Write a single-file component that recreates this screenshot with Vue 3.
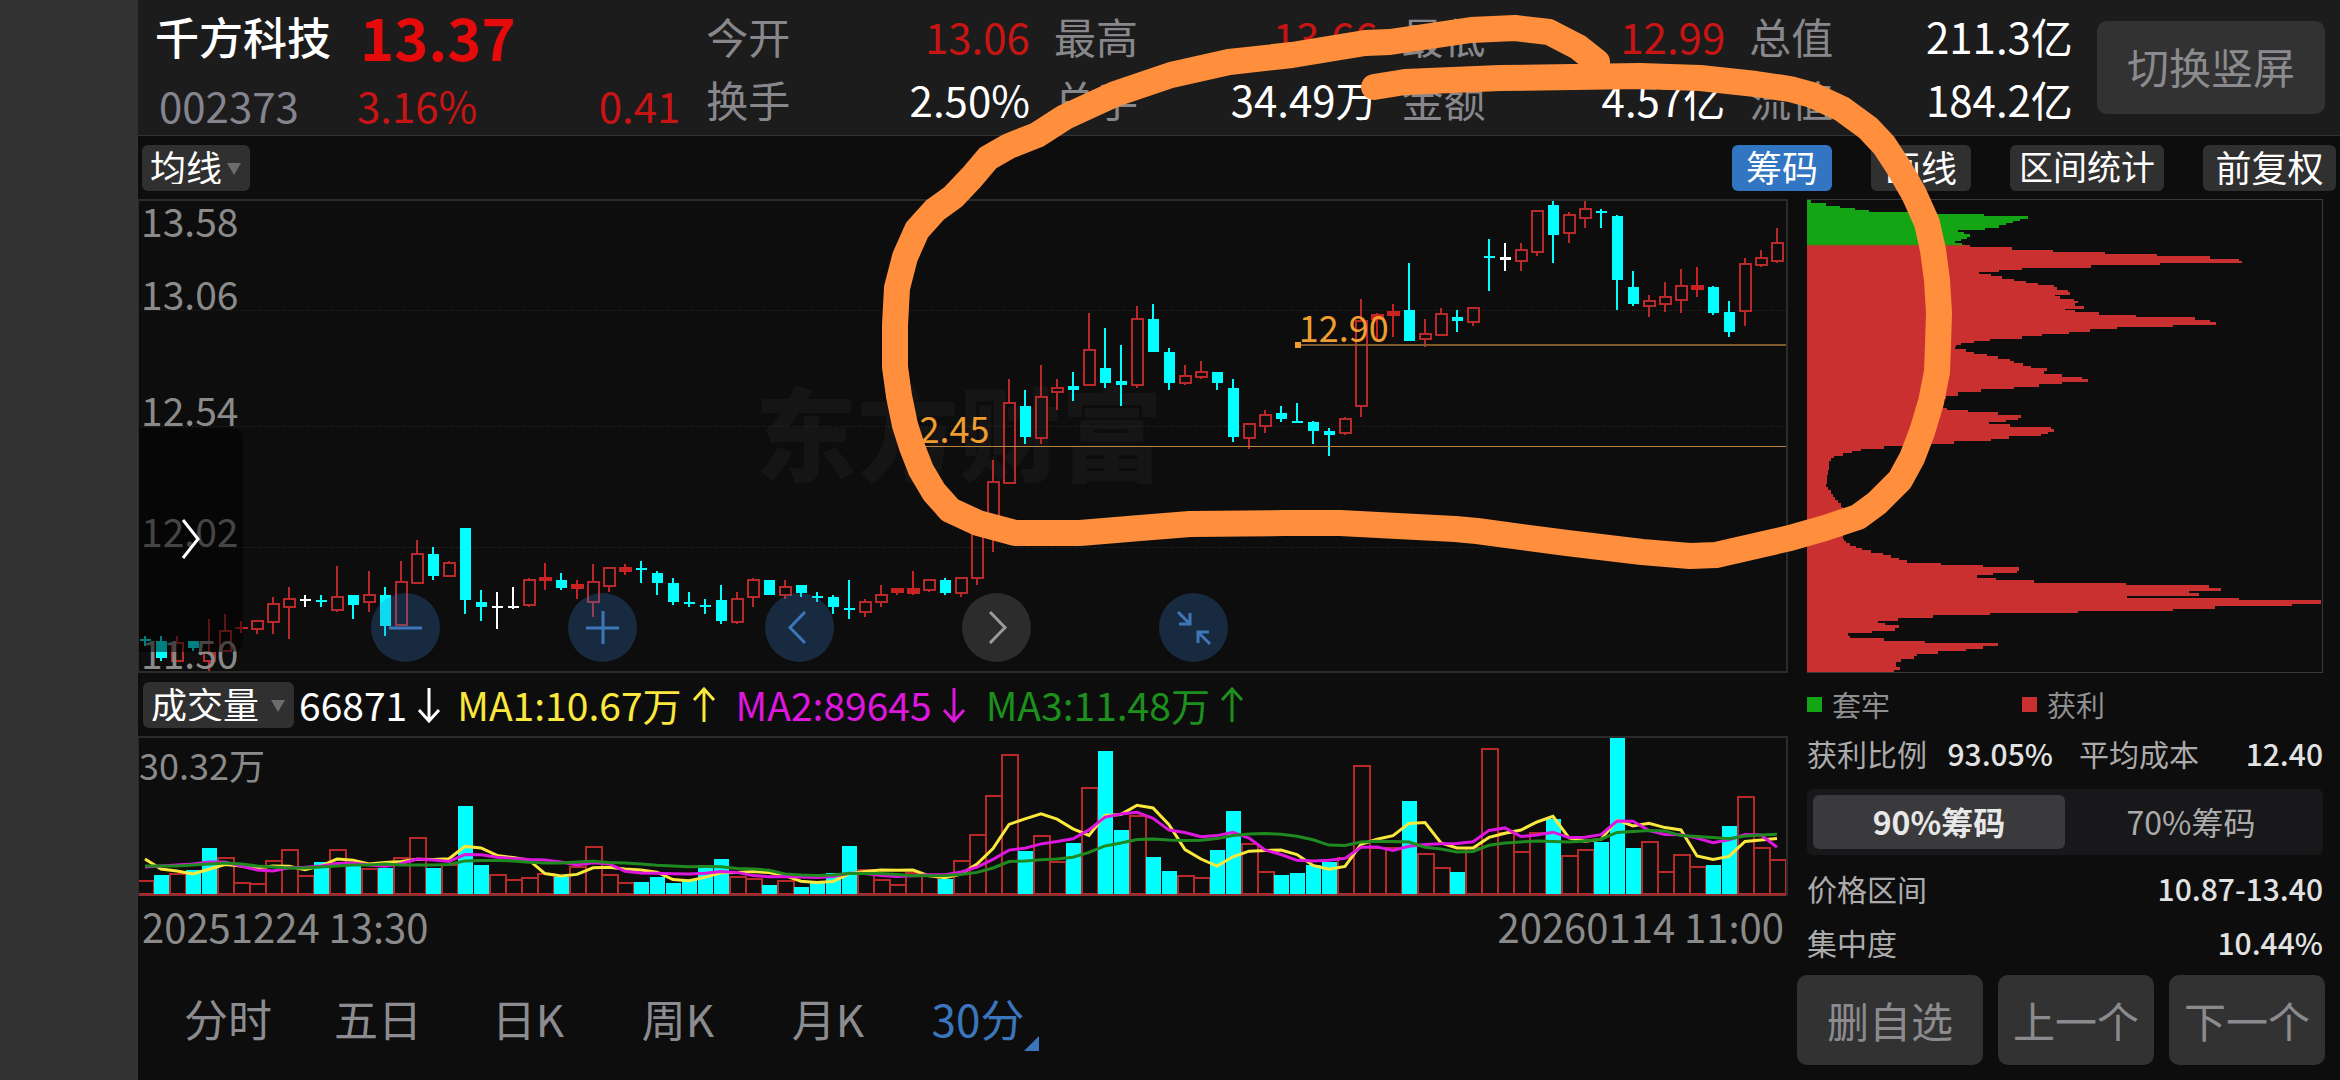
<script setup>
import { ref } from 'vue'

const stats = [
  [{ label: '今开', value: '13.06', up: true }, { label: '换手', value: '2.50%' }],
  [{ label: '最高', value: '13.66', up: true }, { label: '总手', value: '34.49万' }],
  [{ label: '最低', value: '12.99', up: true }, { label: '金额', value: '4.57亿' }],
  [{ label: '总值', value: '211.3亿' }, { label: '流值', value: '184.2亿' }],
]

const tools = [
  { name: '筹码', cls: 'on' },
  { name: '画线', cls: '' },
  { name: '区间统计', cls: 'wide' },
  { name: '前复权', cls: 'mid' },
]

const periods = ['分时', '五日', '日K', '周K', '月K', '30分']
const period = ref('30分')
const share = ref('90%筹码')

// Price chart space: x 138..1788, y 199..673. One bar every 16 units.
const STEP = 16
const FIRST = 145
const cx = (i) => FIRST + i * STEP

// kind (c = down, r = up, f = flat up, w = unchanged), high, body top, body bottom, low
const candles = [
  ['c', 636, 639, 641, 646], ['c', 636, 641, 658, 661], ['r', 636, 642, 662, 662], ['c', 641, 641, 648, 651],
  ['r', 619, 652, 662, 673], ['r', 614, 630, 652, 652], ['f', 621, 627, 629, 633], ['r', 620, 620, 630, 634],
  ['r', 597, 603, 623, 634], ['r', 587, 598, 608, 639], ['w', 595, 599, 601, 607], ['c', 595, 600, 602, 607],
  ['r', 566, 596, 611, 612], ['c', 595, 595, 605, 619], ['r', 571, 594, 603, 612], ['c', 587, 595, 626, 636],
  ['r', 561, 581, 626, 626], ['r', 540, 553, 584, 584], ['c', 547, 554, 576, 580], ['r', 561, 562, 577, 577],
  ['c', 528, 528, 600, 614], ['c', 590, 602, 607, 621], ['w', 592, 606, 608, 629], ['w', 587, 606, 608, 609],
  ['r', 578, 579, 606, 607], ['f', 563, 577, 581, 590], ['c', 573, 580, 588, 590], ['f', 580, 584, 589, 599],
  ['r', 564, 581, 603, 617], ['r', 567, 567, 587, 592], ['f', 564, 567, 572, 575], ['c', 561, 568, 570, 583],
  ['c', 571, 573, 583, 595], ['c', 578, 583, 602, 605], ['c', 592, 602, 604, 607], ['c', 599, 605, 607, 614],
  ['c', 585, 600, 621, 624], ['r', 592, 598, 623, 624], ['r', 578, 579, 598, 607], ['c', 580, 580, 595, 595],
  ['r', 580, 586, 596, 599], ['c', 585, 585, 593, 597], ['c', 592, 596, 598, 602], ['c', 595, 597, 607, 614],
  ['c', 580, 608, 610, 619], ['r', 599, 601, 613, 617], ['r', 585, 594, 603, 607], ['f', 588, 588, 593, 595],
  ['f', 571, 588, 594, 595], ['r', 579, 579, 591, 592], ['c', 578, 580, 593, 595], ['r', 577, 577, 594, 597],
  ['r', 524, 530, 579, 585], ['r', 460, 481, 527, 552], ['r', 379, 402, 484, 484], ['c', 390, 406, 437, 444],
  ['r', 365, 396, 439, 444], ['r', 379, 387, 393, 410], ['c', 372, 386, 390, 401], ['r', 313, 349, 386, 386],
  ['c', 328, 368, 383, 388], ['c', 345, 381, 385, 406], ['r', 306, 318, 386, 388], ['c', 304, 319, 352, 352],
  ['c', 348, 352, 383, 390], ['r', 365, 375, 384, 385], ['r', 361, 371, 378, 379], ['c', 372, 372, 383, 390],
  ['c', 379, 388, 437, 442], ['r', 423, 423, 439, 449], ['r', 410, 414, 427, 433], ['c', 406, 413, 419, 422],
  ['c', 403, 421, 423, 423], ['c', 421, 422, 431, 444], ['c', 428, 431, 435, 456], ['r', 417, 418, 434, 435],
  ['r', 299, 320, 407, 417], ['f', 313, 314, 320, 339], ['f', 304, 311, 316, 337], ['c', 263, 310, 341, 341],
  ['r', 319, 333, 340, 347], ['r', 308, 313, 336, 336], ['c', 310, 317, 321, 332], ['r', 307, 307, 323, 326],
  ['c', 239, 256, 258, 291], ['w', 243, 257, 260, 271], ['r', 243, 249, 262, 271], ['r', 210, 210, 253, 256],
  ['c', 199, 205, 235, 263], ['r', 212, 214, 234, 243], ['r', 201, 208, 219, 228], ['c', 209, 211, 213, 228],
  ['c', 215, 216, 280, 310], ['c', 271, 287, 304, 306], ['r', 295, 300, 307, 317], ['r', 282, 296, 305, 312],
  ['r', 269, 285, 301, 313], ['f', 267, 285, 290, 297], ['c', 286, 287, 313, 315], ['c', 301, 312, 332, 337],
  ['r', 258, 263, 312, 326], ['r', 250, 257, 266, 267], ['r', 228, 242, 262, 263],
]

// Volume bar heights; unchanged bars are drawn as rising ones.
const volumes = [
  15, 20, 22, 25, 47, 38, 13, 12, 35, 46, 20, 33, 46, 29, 27, 27, 38, 58, 27, 31,
  89, 30, 21, 16, 18, 22, 18, 29, 49, 21, 13, 13, 18, 12, 15, 30, 36, 19, 17, 10,
  15, 8, 12, 22, 49, 26, 16, 11, 23, 20, 16, 35, 61, 100, 141, 44, 60, 34, 52, 108,
  144, 65, 80, 38, 24, 20, 18, 45, 84, 52, 24, 20, 22, 30, 33, 38, 130, 48, 48, 94,
  42, 28, 23, 48, 147, 63, 44, 63, 76, 40, 46, 53, 159, 47, 54, 24, 41, 29, 30, 69,
  99, 48, 36,
]
const BASE = 895
const volumeDown = new Set([
  1, 3, 4, 11, 13, 15, 18, 20, 21, 26, 31, 32, 33, 34, 35, 36, 39, 41, 42, 43, 44, 50, 55, 58, 60, 61,
  63, 64, 67, 68, 71, 72, 73, 74, 79, 82, 88, 91, 92, 93, 98, 99,
])

// Averages start from values carried over from bars before the visible window.
const carried = {
  5: [36, 26, 24, 21],
  10: [28, 29, 30, 31, 33, 33, 29, 25, 24],
  20: [29, 29, 29, 30, 31, 32, 31, 29, 28, 27, 27, 28, 29, 30, 30, 31, 30, 30, 30],
}
function average(n) {
  return volumes
    .map((_, i) => {
      const v = i < n - 1
        ? carried[n][i]
        : volumes.slice(i - n + 1, i + 1).reduce((a, b) => a + b, 0) / n
      return `${cx(i)},${(BASE - v).toFixed(1)}`
    })
    .join(' ')
}
const averages = [
  { color: '#fbe83c', points: average(5) },
  { color: '#dd17dd', points: average(10) },
  { color: '#1f8a1f', points: average(20) },
]

// Chip distribution: [row top, row right edge]
const trapped = [
  [28, 60], [37, 102], [44, 143], [51, 185], [58, 225], [63, 340], [69, 553], [76, 680], [84, 658], [90, 638],
  [97, 617], [103, 596], [110, 556], [116, 480], [122, 498], [128, 515], [137, 505], [144, 487], [150, 472], [156, 492],
]
const profit = [
  [163, 515], [169, 633], [176, 751], [183, 900], [190, 1049], [196, 1199], [204, 1284], [210, 1290], [218, 1058],
  [224, 860], [231, 663], [238, 596], [245, 540], [249, 573], [257, 606], [264, 640], [270, 673], [276, 707],
  [283, 754], [290, 762], [298, 793], [304, 799], [312, 756], [317, 771], [324, 810], [331, 823], [337, 815],
  [345, 840], [354, 785], [358, 815], [365, 884], [373, 987], [380, 1158], [387, 1200], [393, 1217], [402, 1094],
  [409, 934], [416, 858], [423, 798], [430, 721], [436, 662], [444, 570], [450, 526], [457, 487], [464, 474],
  [470, 470], [476, 502], [483, 526], [490, 562], [497, 593], [505, 627], [512, 641], [518, 664], [525, 687],
  [532, 733], [541, 724], [550, 778], [559, 834], [567, 850], [576, 778], [582, 710], [590, 639], [597, 544],
  [604, 479], [618, 446], [625, 436], [652, 449], [658, 507], [666, 593], [673, 659], [682, 650], [689, 616],
  [695, 567], [700, 627], [709, 744], [716, 755], [724, 738], [732, 718], [738, 625], [746, 573], [753, 468],
  [760, 400], [768, 267], [775, 203], [782, 178], [789, 151], [797, 125], [803, 117], [812, 112], [827, 110],
  [840, 108], [855, 106], [870, 104], [882, 102], [890, 108], [900, 116], [910, 122], [920, 129], [930, 137],
  [940, 144], [950, 150], [1046, 153], [1053, 160], [1060, 172], [1067, 188], [1074, 205], [1081, 231], [1088, 265],
  [1096, 289], [1103, 311], [1110, 334], [1118, 430], [1125, 552], [1132, 654], [1142, 648], [1149, 580],
  [1156, 533], [1163, 587], [1170, 698], [1178, 961], [1186, 1197], [1194, 1231], [1202, 1141], [1209, 1169],
  [1217, 964], [1224, 1283], [1231, 1517], [1241, 1434], [1248, 1213], [1256, 1093], [1263, 824], [1270, 570],
  [1277, 408], [1286, 308], [1293, 251], [1299, 271], [1307, 311], [1316, 299], [1325, 234], [1331, 166],
  [1338, 170], [1346, 268], [1353, 386], [1361, 593], [1370, 550], [1377, 502], [1385, 422], [1393, 361],
  [1400, 354], [1409, 318], [1416, 302], [1431, 315], [1440, 297],
]
function steps(rows, end) {
  let d = `M48 ${rows[0][0]}`
  rows.forEach(([top, right], i) => {
    d += `H${right}V${i + 1 < rows.length ? rows[i + 1][0] : end}`
  })
  return d + 'H48Z'
}
const trappedPath = steps(trapped, 163)
const profitPath = steps(profit, 1447)
</script>

<template>
  <div class="app">
    <div class="gutter"></div>
    <main class="screen">
      <header class="head">
        <section class="quote">
          <div class="line top">
            <h1>千方科技</h1>
            <strong class="price">13.37</strong>
          </div>
          <div class="line low">
            <span class="code">002373</span>
            <span class="pct">3.16%</span>
            <span class="chg">0.41</span>
          </div>
        </section>
        <section class="stats">
          <dl v-for="(group, g) in stats" :key="g">
            <div v-for="s in group" :key="s.label">
              <dt>{{ s.label }}</dt>
              <dd :class="{ up: s.up }">{{ s.value }}</dd>
            </div>
          </dl>
        </section>
        <button class="rotate" type="button">切换竖屏</button>
      </header>

      <nav class="tools">
        <span class="pick ma">
          <select aria-label="主图指标"><option>均线</option></select>
        </span>
        <div class="tool-set">
          <button v-for="t in tools" :key="t.name" type="button" class="tool" :class="t.cls">{{ t.name }}</button>
        </div>
      </nav>

      <div class="body">
        <section class="charts">
          <div class="kline">
            <span class="watermark">东方财富</span>
            <svg class="plot" viewBox="138 199 1650 474" preserveAspectRatio="none">
              <g stroke="#2c2c2c" stroke-dasharray="1 2">
                <path d="M138 310.5H1788M138 426.5H1788M138 547.5H1788" />
              </g>
              <g v-for="(c, i) in candles" :key="i" :class="'k-' + c[0]">
                <template v-if="c[0] === 'r'">
                  <rect :x="cx(i) - 1" :y="c[1]" width="2" :height="c[2] - c[1]" />
                  <rect class="box" :x="cx(i) - 5" :y="c[2] + 1" width="11" :height="Math.max(c[3] - c[2] - 2, 1)" />
                  <rect :x="cx(i) - 1" :y="c[3]" width="2" :height="c[4] - c[3]" />
                </template>
                <template v-else>
                  <rect :x="cx(i) - 1" :y="c[1]" width="2" :height="c[4] - c[1]" />
                  <rect
                    :x="cx(i) - (c[0] === 'f' ? 6 : 5)" :y="c[2]"
                    :width="c[0] === 'f' ? 13 : 11" :height="c[3] - c[2]"
                  />
                </template>
              </g>
              <path d="M1298 345H1788" stroke="#80592a" stroke-width="2" />
              <rect x="1295" y="342" width="6" height="6" fill="#ef9c30" />
              <path d="M915 446.5H1788" stroke="#b98342" />
            </svg>
            <span class="axis a1">13.58</span>
            <span class="axis a2">13.06</span>
            <span class="axis a3">12.54</span>
            <span class="axis a4">12.02</span>
            <span class="axis a5">11.50</span>
            <span class="mark m1">12.90</span>
            <span class="mark m2">12.45</span>
            <button class="drawer" type="button" aria-label="展开">
              <svg viewBox="0 0 20 44"><path d="M2 3L17 22L2 41" /></svg>
            </button>
            <div class="controls">
              <button type="button" aria-label="缩小"><svg viewBox="0 0 69 69"><path d="M18 35H51" /></svg></button>
              <button type="button" aria-label="放大"><svg viewBox="0 0 69 69"><path d="M18 35H51M35 18V51" /></svg></button>
              <button type="button" aria-label="左移"><svg viewBox="0 0 69 69"><path d="M40 19L25 34.500L40 50" /></svg></button>
              <button type="button" class="off" aria-label="右移"><svg viewBox="0 0 69 69"><path d="M28 19L43 34.500L28 50" /></svg></button>
              <button type="button" aria-label="还原">
                <svg viewBox="0 0 69 69"><path d="M19 19L31 31M31 20V31H20M51 51L39 39M39 50V39H50" /></svg>
              </button>
            </div>
          </div>

          <div class="vol-info">
            <span class="pick vol">
              <select aria-label="副图指标"><option>成交量</option></select>
            </span>
            <span class="v0">66871<svg viewBox="0 0 24 36"><path d="M12 1V34M2 23L12 34L22 23" /></svg></span>
            <span class="v1">MA1:10.67万<svg viewBox="0 0 24 36"><path d="M12 35V2M2 13L12 2L22 13" /></svg></span>
            <span class="v2">MA2:89645<svg viewBox="0 0 24 36"><path d="M12 1V34M2 23L12 34L22 23" /></svg></span>
            <span class="v3">MA3:11.48万<svg viewBox="0 0 24 36"><path d="M12 35V2M2 13L12 2L22 13" /></svg></span>
          </div>

          <div class="volume">
            <svg class="plot" viewBox="138 736 1650 160" preserveAspectRatio="none">
              <g v-for="(v, i) in volumes" :key="i">
                <rect v-if="volumeDown.has(i)" :x="cx(i) - 7" :y="BASE - v" width="15" :height="v - 1" fill="#00ffff" />
                <rect v-else class="vbox" :x="cx(i) - 7" :y="BASE - v + 1" width="16" :height="v - 2" />
              </g>
              <path d="M138 895H1788" stroke="#8c3030" stroke-width="2" />
              <polyline v-for="a in averages" :key="a.color" class="avg" :points="a.points" :stroke="a.color" />
            </svg>
            <span class="vmax">30.32万</span>
          </div>

          <div class="dates">
            <time>20251224 13:30</time>
            <time>20260114 11:00</time>
          </div>

          <nav class="periods">
            <button
              v-for="p in periods" :key="p" type="button"
              :class="{ active: p === period }" @click="period = p"
            >{{ p }}</button>
          </nav>
        </section>

        <aside class="chips">
          <div class="inner">
            <svg class="dist" viewBox="48 27 1472 1420" preserveAspectRatio="none">
              <path :d="trappedPath" fill="#14a514" />
              <path :d="profitPath" fill="#cb3030" />
              <path d="M48 163H500" stroke="#806018" stroke-width="3" />
            </svg>
            <div class="legend">
              <span class="green">套牢</span>
              <span class="red">获利</span>
            </div>
            <div class="row pair">
              <p><span>获利比例</span><b>93.05%</b></p>
              <p><span>平均成本</span><b>12.40</b></p>
            </div>
            <div class="segment">
              <button
                v-for="s in ['90%筹码', '70%筹码']" :key="s" type="button"
                :class="{ active: s === share }" @click="share = s"
              >{{ s }}</button>
            </div>
            <p class="row range"><span>价格区间</span><b>10.87-13.40</b></p>
            <p class="row"><span>集中度</span><b>10.44%</b></p>
          </div>
          <div class="actions">
            <button type="button" class="del">删自选</button>
            <button type="button">上一个</button>
            <button type="button">下一个</button>
          </div>
        </aside>
      </div>
    </main>

    <svg class="scribble" viewBox="0 0 2340 1080" preserveAspectRatio="none">
      <path
        d="M1374 87L1405 82L1500 78L1640 76L1700 78L1756 84L1790 89L1812 95L1842 109L1868 128L1884 145L1899 168L1914 194
        L1927 223L1933 250L1937 280L1939 313L1938 345L1937 372L1931 402L1922 432L1912 458L1900 480L1877 503L1858 517
        L1825 528L1790 538L1716 555L1690 556L1642 552L1567 543L1477 531L1455 529L1340 523L1285 523L1190 524L1140 528
        L1080 533L1015 533L978 523L950 510L934 492L921 470L912 447L905 425L899 396L895 367L895 325L897 288L905 257
        L917 230L935 210L953 197L972 177L988 158L1009 146L1037 135L1065 117L1115 94L1171 75L1229 62L1292 55L1365 43L1390 42
        L1471 30L1515 28L1549 32L1578 47L1597 62"
      />
    </svg>
  </div>
</template>

<style>
body {
  margin: 0;
  background: #0d0d0d;
}
</style>

<style scoped>
.app {
  position: relative;
  display: flex;
  min-height: 100vh;
  background: #0d0d0d;
  color: #fff;
  font-family: "Noto Sans CJK SC", sans-serif;
  line-height: 1;
}
h1, p, dl, dd {
  margin: 0;
}
button, select {
  border: 0;
  padding: 0;
  margin: 0;
  font-family: inherit;
  line-height: 1;
  cursor: pointer;
}
.gutter {
  flex: 0 0 138px;
  background: #323232;
}
.screen {
  flex: 1;
  min-width: 0;
  display: flex;
  flex-direction: column;
}

.head {
  display: flex;
  align-items: flex-start;
  box-sizing: border-box;
  height: 136px;
  padding: 0 15px 0 17px;
  background: #1c1c1c;
  border-bottom: 1px solid #333;
}
.quote {
  flex: 525 0 0;
  margin-right: 26px;
}
.line {
  display: flex;
  align-items: center;
}
.line.top {
  height: 72px;
}
.line.low {
  height: 66px;
  font-size: 42px;
}
h1 {
  flex: 0 0 205px;
  font-size: 44px;
  font-weight: 500;
}
.price {
  color: #e60a0a;
  font-size: 58px;
  font-weight: 700;
}
.code {
  flex: 0 0 202px;
  padding-left: 4px;
  box-sizing: border-box;
  color: #84848f;
}
.pct, .chg, .up {
  color: #c91414;
}
.chg {
  margin-left: auto;
}
.stats {
  flex: 1366 0 0;
  display: flex;
  gap: 24px;
  margin-right: 24px;
}
.stats dl {
  flex: 1;
  padding-top: 4px;
}
.stats dl > div {
  display: flex;
  justify-content: space-between;
  align-items: center;
  height: 63px;
  font-size: 42px;
}
.stats dt {
  color: #88888c;
}
.stats dd:not(.up) {
  color: #fff;
}
.rotate {
  flex: 228 0 0;
  height: 93px;
  margin-top: 21px;
  padding-bottom: 3px;
  border-radius: 10px;
  background: #323232;
  color: #8b8b8f;
  font-size: 42px;
}

.tools {
  display: flex;
  justify-content: space-between;
  align-items: center;
  height: 63px;
  padding: 0 4px;
}
.tool-set {
  display: flex;
  gap: 39px;
}
.tool {
  width: 100px;
  height: 46px;
  padding-bottom: 3px;
  border-radius: 6px;
  background: #303030;
  color: #fff;
  font-size: 36px;
  white-space: nowrap;
}
.tool.on {
  background: #3175c3;
}
.tool.wide {
  width: 154px;
  font-size: 34px;
}
.tool.mid {
  width: 133px;
}
.pick {
  position: relative;
  display: block;
  height: 46px;
}
.pick select {
  appearance: none;
  width: 100%;
  height: 46px;
  padding: 0 0 3px 8px;
  border-radius: 6px;
  background: #303030;
  color: #fff;
  font-size: 36px;
}
.pick::after {
  content: "";
  position: absolute;
  right: 9px;
  top: 18px;
  border: 7px solid transparent;
  border-top: 12px solid #6c6c6c;
  border-bottom: 0;
  pointer-events: none;
}
.pick.ma {
  width: 108px;
}
.pick.vol {
  width: 151px;
}

.body {
  display: flex;
}
.charts {
  flex: 1650 0 0;
  min-width: 0;
}
.kline {
  position: relative;
  height: 474px;
}
.plot {
  position: relative;
  display: block;
  width: 100%;
  height: 100%;
  box-sizing: border-box;
  shape-rendering: crispEdges;
  fill: none;
}
.kline::after, .volume::after {
  content: "";
  position: absolute;
  inset: 0;
  border: 1px solid #2b2b2b;
  border-width: 2px 2px 2px 1px;
  pointer-events: none;
}
.volume::after {
  border-bottom: 0;
}
.k-c { fill: #00ffff; }
.k-r { fill: #b82a2a; }
.k-f { fill: #c82222; }
.k-w { fill: #fff; }
.box {
  fill: none;
  stroke: #b82a2a;
  stroke-width: 2;
}
.vbox {
  stroke: #b82a2a;
  stroke-width: 2;
}
.avg {
  stroke-width: 3;
  shape-rendering: geometricPrecision;
}
.watermark {
  position: absolute;
  left: 37.4%;
  top: 180px;
  font-size: 102px;
  font-weight: 900;
  color: #151515;
}
.axis {
  position: absolute;
  left: 3px;
  font-size: 39px;
  color: #8a8a8a;
}
.a1 { top: 2px; }
.a2 { top: 75px; }
.a3 { top: 191px; }
.a4 { top: 312px; }
.a5 { top: 434px; }
.mark {
  position: absolute;
  font-size: 36px;
  color: #ef9c30;
}
.m1 {
  right: 24.2%;
  top: 109px;
}
.m2 {
  right: 48.4%;
  top: 210px;
}
.drawer {
  position: absolute;
  left: 0;
  top: 229px;
  width: 105px;
  height: 224px;
  border-radius: 0 10px 10px 0;
  background: rgba(0, 0, 0, 0.5);
}
.drawer svg {
  width: 20px;
  height: 44px;
  fill: none;
  stroke: #fff;
  stroke-width: 3;
}
.controls {
  position: absolute;
  left: 233px;
  bottom: 11px;
  display: flex;
  gap: 128px;
}
.controls button {
  width: 69px;
  height: 69px;
  border-radius: 50%;
  background: rgba(49, 117, 195, 0.28);
}
.controls svg {
  display: block;
  fill: none;
  stroke: #3f76ba;
  stroke-width: 3;
}
.controls .off {
  background: rgba(255, 255, 255, 0.13);
}
.controls .off svg {
  stroke: #9a9a9a;
}

.vol-info {
  display: flex;
  align-items: center;
  height: 63px;
  padding-left: 5px;
  font-size: 39px;
  white-space: nowrap;
}
.vol-info > span:not(.pick) {
  display: flex;
  align-items: center;
  margin-right: 20px;
}
.vol-info svg {
  width: 24px;
  height: 36px;
  margin-left: 10px;
  fill: none;
  stroke: currentColor;
  stroke-width: 3;
}
.vol-info > .v0:not(.pick) {
  margin: 0 16px 0 5px;
}
.v1 { color: #fbe83c; }
.v2 { color: #dd17dd; }
.v3 { color: #1c8f1c; }
.volume {
  position: relative;
  height: 160px;
}
.vmax {
  position: absolute;
  left: 1px;
  top: 10px;
  font-size: 36px;
  color: #8a8a8a;
}
.dates {
  display: flex;
  justify-content: space-between;
  align-items: center;
  height: 60px;
  padding: 0 4px;
  font-size: 40px;
  color: #8a8a8a;
}
.periods {
  display: flex;
  height: 124px;
  padding-left: 15px;
}
.periods button {
  position: relative;
  width: 150px;
  height: 124px;
  background: none;
  color: #8c8c90;
  font-size: 44px;
}
.periods .active {
  color: #3b76bd;
}
.periods .active::after {
  content: "";
  position: absolute;
  right: 14px;
  bottom: 29px;
  border-left: 15px solid transparent;
  border-bottom: 15px solid #3b76bd;
}

.chips {
  flex: 528 0 0;
  min-width: 0;
  padding: 0 15px 0 9px;
}
.inner {
  padding: 0 2px 0 10px;
}
.dist {
  display: block;
  width: 100%;
  height: 474px;
  box-sizing: border-box;
  border: 1px solid #3a3a3a;
  border-left: 0;
  shape-rendering: crispEdges;
}
.legend {
  display: flex;
  height: 62px;
  font-size: 29px;
  color: #909090;
}
.legend span {
  display: flex;
  align-items: center;
  width: 215px;
}
.legend span::before {
  content: "";
  width: 15px;
  height: 15px;
  margin-right: 10px;
}
.legend .green::before { background: #14a514; }
.legend .red::before { background: #cb3030; }
.row, .pair p {
  display: flex;
  justify-content: space-between;
  align-items: center;
}
.row {
  height: 54px;
  font-size: 30px;
  color: #ababab;
}
.pair {
  height: 36px;
}
.pair p:first-child {
  flex: 0 0 246px;
}
.pair p:last-child {
  flex: 0 0 244px;
}
.row b {
  color: #e2e2e2;
  font-weight: 500;
}
.segment {
  display: flex;
  height: 54px;
  margin: 18px 0 6px;
  padding: 6px;
  border-radius: 6px;
  background: #18181a;
}
.segment button {
  flex: 1;
  padding-bottom: 3px;
  border-radius: 6px;
  background: none;
  color: #ababab;
  font-size: 32px;
}
.segment .active {
  background: #3a3a3c;
  color: #e8e8e8;
  font-weight: 700;
}
.actions {
  display: flex;
  gap: 15px;
  margin-top: 6px;
}
.actions button {
  flex: 156 0 0;
  height: 90px;
  border-radius: 10px;
  background: #323232;
  color: #8b8b8f;
  font-size: 42px;
}
.actions .del {
  flex-grow: 186;
}

.scribble {
  position: absolute;
  left: 0;
  top: 0;
  width: 100%;
  height: 1080px;
  fill: none;
  stroke: #ff8f3c;
  stroke-width: 26;
  stroke-linecap: round;
  stroke-linejoin: round;
  pointer-events: none;
}
</style>
